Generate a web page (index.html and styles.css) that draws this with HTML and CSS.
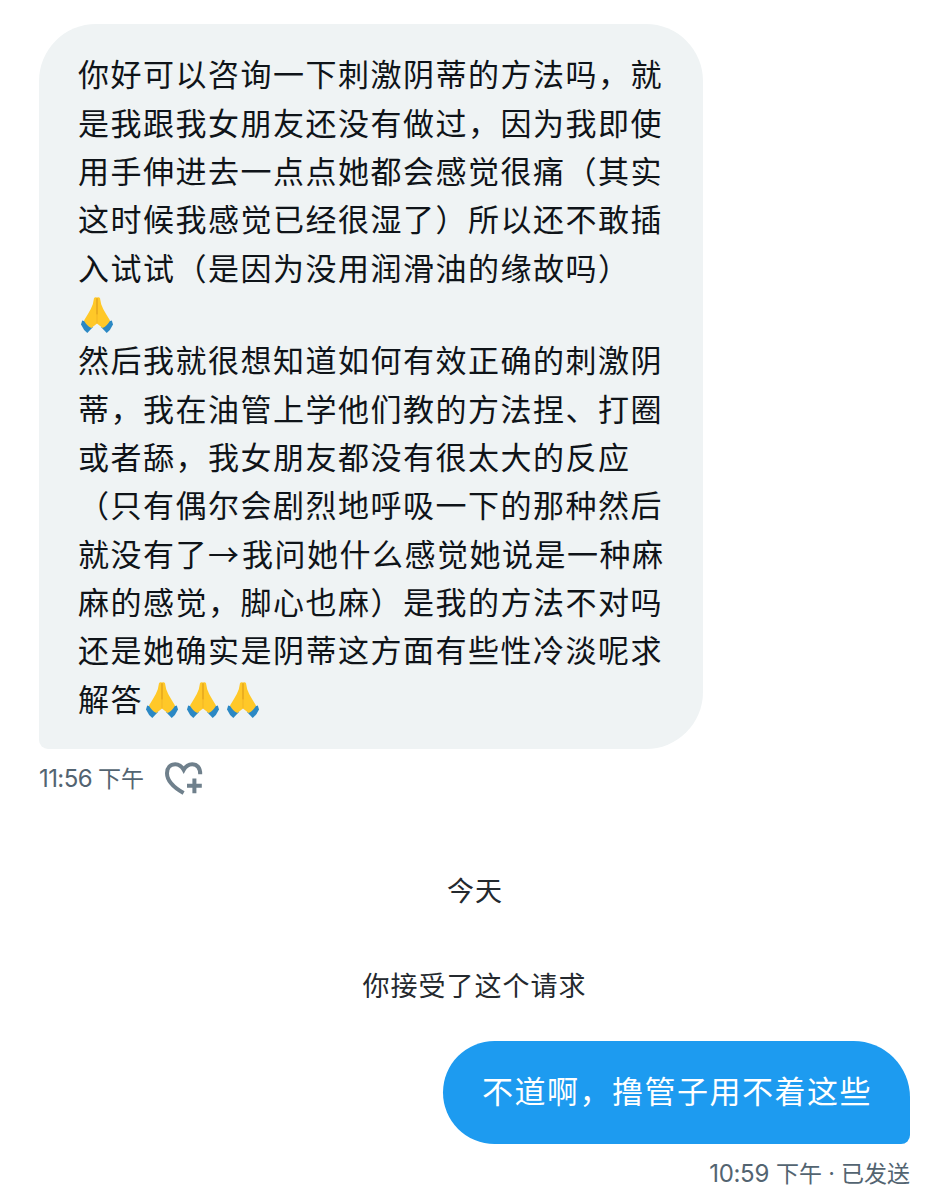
FILE: index.html
```
<!DOCTYPE html>
<html lang="zh-CN">
<head>
    <meta charset="UTF-8" />
    <meta name="viewport" content="width=device-width, initial-scale=1.0" />
    <title>私信</title>
    <link rel="stylesheet" href="styles.css">
</head>
<body>
    <svg class="defs" aria-hidden="true">
        <symbol id="pray" viewBox="0 0 32 36">
            <path d="M4.6 24.4L1.2 23.6L0 27.4Q2.6 33.2 6.3 36L12 30Z" fill="#2b88c4" />
            <path d="M27.4 24.4L30.8 23.6L32 27.4Q29.4 33.2 25.7 36L20 30Z" fill="#2b88c4" />
            <path d="M16 .6Q14 -.4 13 1.2L11.8 7.2Q10 12.4 6.8 17.2L3 23.4Q5.4 28.4 10.4 31L16 26.4L21.6 31Q26.6 28.4 29 23.4L25.2 17.2Q22 12.4 20.2 7.2L19 1.2Q18 -.4 16 .6Z" fill="#ffc828" />
            <path d="M16 1.2V17.5" fill="none" stroke="#e0a01c" stroke-width="1.3" />
            <path d="M16 17V26.5" fill="none" stroke="#f2b524" stroke-width="1" />
        </symbol>
    </svg>

    <main class="chat">
        <div class="message received">
            <div class="bubble">
                <p>你好可以咨询一下刺激阴蒂的方法吗，就<br>是我跟我女朋友还没有做过，因为我即使<br>用手伸进去一点点她都会感觉很痛（其实<br>这时候我感觉已经很湿了）所以还不敢插<br>入试试（是因为没用润滑油的缘故吗）</p>
                <p class="emoji-line"><svg class="emoji" role="img" aria-label="🙏"><use href="#pray" /></svg></p>
                <p>然后我就很想知道如何有效正确的刺激阴<br>蒂，我在油管上学他们教的方法捏、打圈<br>或者舔，我女朋友都没有很太大的反应<br>（只有偶尔会剧烈地呼吸一下的那种然后<br>就没有了<span class="arrow">→</span>我问她什么感觉她说是一种麻<br>麻的感觉，脚心也麻）是我的方法不对吗<br>还是她确实是阴蒂这方面有些性冷淡呢求<br>解答<svg class="emoji" role="img" aria-label="🙏"><use href="#pray" /></svg><svg class="emoji" role="img" aria-label="🙏"><use href="#pray" /></svg><svg class="emoji" role="img" aria-label="🙏"><use href="#pray" /></svg></p>
            </div>
            <div class="meta">
                <span class="time">11:56</span>
                <span class="period">下午</span>
                <svg class="react" viewBox="0 0 38 34" aria-label="添加回应">
                    <path d="M18.6 31C9.8 26 2 18.6 2 11.2C2 5.8 5.4 2.2 10.2 2.2C13.8 2.2 16.8 4.4 18.7 7.9C20.6 4.4 23.6 2.2 27.2 2.2C32.2 2.2 35.3 6 35.2 12.2" />
                    <path d="M29.4 16.4V31.2M22 23.8H36.8" />
                </svg>
            </div>
        </div>

        <div class="day">今天</div>
        <div class="notice">你接受了这个请求</div>

        <div class="message sent">
            <div class="bubble">
                <p>不道啊，撸管子用不着这些</p>
            </div>
            <div class="meta">
                <span class="time">10:59</span>
                <span class="period">下午</span>
                <span class="dot">·</span>
                <span class="status">已发送</span>
            </div>
        </div>
    </main>
</body>
</html>
```
FILE: styles.css
```
body {
    margin: 0;
    background-color: #fff;
    font-family: "Noto Sans CJK SC", sans-serif;
    color: #0f1419;
    text-spacing-trim: space-all;
}

.defs {
    display: block;
    width: 0;
    height: 0;
}

.chat {
    display: flex;
    flex-direction: column;
    padding: 24px 39px 0;
}

.message {
    display: flex;
    flex-direction: column;
}

.bubble {
    box-sizing: border-box;
    padding: 25.4px 39px 0;
    font-size: 31px;
    line-height: 48.3px;
    letter-spacing: 1.5px;
    white-space: nowrap;
}

.bubble p {
    margin: 0;
}

.received .bubble {
    width: 664px;
    height: 725px;
    background-color: #eff3f4;
    border-radius: 57px 57px 57px 9px;
}

.received .bubble .emoji-line {
    display: flex;
    align-items: center;
    height: 44.6px;
}

.emoji {
    width: 32px;
    height: 36px;
    margin: 0 5px 0 3px;
    vertical-align: -7px;
}

.emoji-line .emoji {
    margin-top: 3px;
}

.emoji + .emoji {
    margin-left: 3.5px;
}

.arrow {
    display: inline-block;
    width: 34px;
}

.sent {
    align-items: flex-end;
}

.sent .bubble {
    width: 467px;
    height: 103px;
    background-color: #1d9bf0;
    border-radius: 52px 57px 9px 52px;
    color: #fff;
}

.meta {
    display: flex;
    align-items: center;
    height: 58px;
    font-size: 23px;
    line-height: 34px;
    color: #536471;
}

.period,
.status {
    margin-bottom: 2px;
}

.time {
    margin-top: 2px;
    margin-right: 6px;
    font-family: Inter, sans-serif;
    font-size: 24px;
    letter-spacing: -0.6px;
}

.sent .time {
    margin-right: 7px;
    letter-spacing: -0.3px;
}

.dot {
    width: 19px;
    font-family: Inter, sans-serif;
    text-align: center;
}

.react {
    width: 38px;
    height: 34px;
    margin-top: 2px;
    margin-left: 21px;
    fill: none;
    stroke: #6f808c;
    stroke-width: 4;
}

.day,
.notice {
    text-align: center;
    font-size: 27px;
    line-height: 40px;
    letter-spacing: 1px;
    color: #24292e;
}

.day {
    margin-top: 63px;
    text-indent: 1px;
}

.notice {
    margin-top: 55px;
    margin-bottom: 36px;
}
```
